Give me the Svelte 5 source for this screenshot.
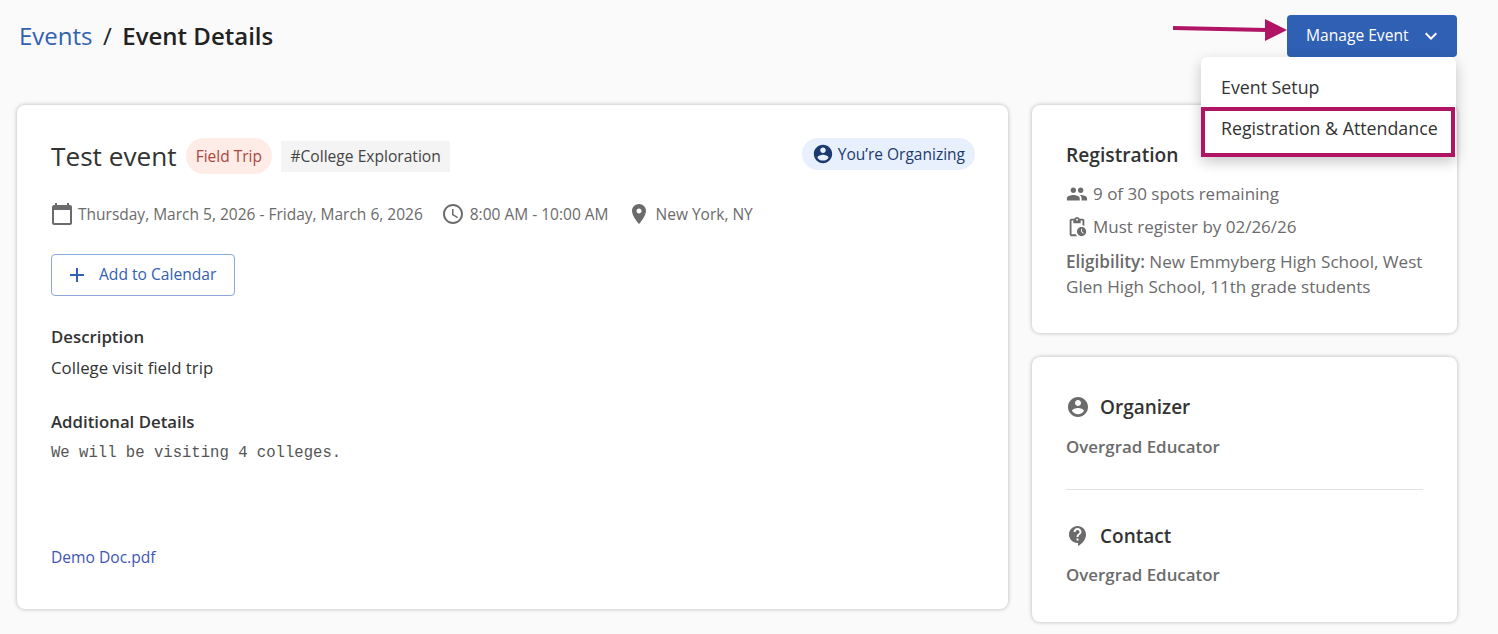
<script lang="ts">
  const paths = {
    calendar: 'M20 3h-1V1h-2v2H7V1H5v2H4c-1.1 0-2 .9-2 2v16c0 1.1.9 2 2 2h16c1.1 0 2-.9 2-2V5c0-1.1-.9-2-2-2zm0 18H4V8h16v13z',
    clock: 'M11.99 2C6.47 2 2 6.48 2 12s4.47 10 9.99 10C17.52 22 22 17.52 22 12S17.52 2 11.99 2zM12 20c-4.42 0-8-3.58-8-8s3.58-8 8-8 8 3.58 8 8-3.58 8-8 8zm.5-13H11v6l5.25 3.15.75-1.23-4.5-2.67z',
    pin: 'M12 2C8.13 2 5 5.13 5 9c0 5.25 7 13 7 13s7-7.75 7-13c0-3.87-3.13-7-7-7zm0 9.5c-1.38 0-2.5-1.12-2.5-2.5s1.12-2.5 2.5-2.5 2.5 1.12 2.5 2.5-1.12 2.5-2.5 2.5z',
    account: 'M12 2C6.48 2 2 6.48 2 12s4.48 10 10 10 10-4.48 10-10S17.52 2 12 2zm0 3c1.66 0 3 1.34 3 3s-1.34 3-3 3-3-1.34-3-3 1.34-3 3-3zm0 14.2c-2.5 0-4.71-1.28-6-3.22.03-1.99 4-3.08 6-3.08 1.99 0 5.97 1.09 6 3.08-1.29 1.94-3.5 3.22-6 3.22z',
    people: 'M16 11c1.66 0 2.99-1.34 2.99-3S17.66 5 16 5c-1.66 0-3 1.34-3 3s1.34 3 3 3zm-8 0c1.66 0 2.99-1.34 2.99-3S9.66 5 8 5C6.34 5 5 6.34 5 8s1.34 3 3 3zm0 2c-2.33 0-7 1.17-7 3.5V19h14v-2.5c0-2.33-4.67-3.5-7-3.5zm8 0c-.29 0-.62.02-.97.05 1.16.84 1.97 1.97 1.97 3.45V19h6v-2.5c0-2.33-4.67-3.5-7-3.5z',
    pending: 'M17 12c-2.76 0-5 2.24-5 5s2.24 5 5 5 5-2.24 5-5-2.24-5-5-5zm1.65 7.35L16.5 17.2V14h1v2.79l1.85 1.85-.7.71zM18 3h-3.18C14.4 1.84 13.3 1 12 1s-2.4.84-2.82 2H6c-1.1 0-2 .9-2 2v15c0 1.1.9 2 2 2h6.11c-.59-.57-1.07-1.25-1.42-2H6V5h2v3h8V5h2v5.08c.71.1 1.38.31 2 .6V5c0-1.1-.9-2-2-2zm-6 2c-.55 0-1-.45-1-1s.45-1 1-1 1 .45 1 1-.45 1-1 1z',
    help: 'M11.5 2C6.81 2 3 5.81 3 10.5S6.81 19 11.5 19h.5v3c4.86-2.34 8-7 8-11.5C20 5.81 16.19 2 11.5 2zm1 14.5h-2v-2h2v2zm0-3.5h-2c0-3.25 3-3 3-5 0-1.1-.9-2-2-2s-2 .9-2 2h-2c0-2.21 1.79-4 4-4s4 1.79 4 4c0 2.5-3 2.75-3 5z',
    plus: 'M19 13h-6v6h-2v-6H5v-2h6V5h2v6h6v2z',
    chevron: 'M7.41 8.59L12 13.17l4.59-4.58L18 10l-6 6-6-6 1.41-1.41z'
  };
</script>

{#snippet icon(name: keyof typeof paths, size: number)}
  <svg class="icon" width={size} height={size} viewBox="0 0 24 24" fill="currentColor" aria-hidden="true"><path d={paths[name]} /></svg>
{/snippet}

<div class="page">
  <header class="top">
    <nav class="crumbs">
      <a href="#events">Events</a>
      <span class="slash">/</span>
      <strong>Event Details</strong>
    </nav>
    <div class="manage">
      <button class="manage-btn">
        <span>Manage Event</span>
        {@render icon('chevron', 24)}
      </button>
      <div class="menu">
        <div class="menu-item">Event Setup</div>
        <div class="menu-item picked">Registration &amp; Attendance</div>
      </div>
      <svg class="arrow" width="116" height="30" viewBox="0 0 116 30" aria-hidden="true">
        <path d="M0 13 L94 15" stroke="#b01464" stroke-width="4" fill="none" />
        <path d="M92 4 L114 15 L92 26 Z" fill="#b01464" />
      </svg>
    </div>
  </header>

  <main class="layout">
    <section class="card event">
      <div class="title-row">
        <h1>Test event</h1>
        <span class="type">Field Trip</span>
        <span class="tag">#College Exploration</span>
        <span class="organizing">{@render icon('account', 22)}You’re Organizing</span>
      </div>
      <div class="meta">
        <span class="meta-item">{@render icon('calendar', 24)}Thursday, March 5, 2026 - Friday, March 6, 2026</span>
        <span class="meta-item">{@render icon('clock', 24)}8:00 AM - 10:00 AM</span>
        <span class="meta-item">{@render icon('pin', 24)}New York, NY</span>
      </div>
      <button class="calendar-btn">{@render icon('plus', 24)}<span>Add to Calendar</span></button>
      <h2 class="desc-head">Description</h2>
      <p class="desc">College visit field trip</p>
      <h2 class="details-head">Additional Details</h2>
      <pre>We will be visiting 4 colleges.</pre>
      <a class="doc" href="#doc">Demo Doc.pdf</a>
    </section>

    <aside class="side">
      <section class="card registration">
        <h2 class="reg-title">Registration</h2>
        <div class="reg-line">{@render icon('people', 22)}9 of 30 spots remaining</div>
        <div class="reg-line">{@render icon('pending', 22)}Must register by 02/26/26</div>
        <p class="eligibility"><b>Eligibility:</b> New Emmyberg High School, West Glen High School, 11th grade students</p>
      </section>
      <section class="card people">
        <h2 class="person-head">{@render icon('account', 24)}Organizer</h2>
        <div class="person">Overgrad Educator</div>
        <hr />
        <h2 class="person-head">{@render icon('help', 24)}Contact</h2>
        <div class="person last">Overgrad Educator</div>
      </section>
    </aside>
  </main>
</div>

<style>
  :global(body) {
    margin: 0;
    background: #fafafa;
    font-family: 'Open Sans', sans-serif;
    color: #333;
  }

  .page {
    width: 1498px;
    height: 634px;
    overflow: hidden;
    box-sizing: border-box;
    padding: 15px 41px 0 17px;
  }

  .top {
    display: flex;
    justify-content: space-between;
    align-items: center;
    height: 42px;
    margin-bottom: 48px;
  }

  .crumbs {
    margin-left: 2px;
    font-size: 24px;
    line-height: 42px;
    display: flex;
    gap: 10.5px;
    color: #222;
  }
  .crumbs a {
    color: #3260b2;
    text-decoration: none;
  }
  .crumbs strong {
    font-weight: 600;
  }

  .manage {
    position: relative;
  }
  .manage-btn {
    display: flex;
    align-items: center;
    justify-content: space-between;
    box-sizing: border-box;
    width: 170px;
    height: 42px;
    padding: 0 14px 2px 19px;
    border: 0;
    border-radius: 4px;
    background: #3060b3;
    color: #fff;
    font: 400 15.6px 'Open Sans', sans-serif;
  }
  .manage-btn .icon {
    margin-top: 2px;
  }
  .menu {
    position: absolute;
    top: 42px;
    right: 1px;
    width: 255px;
    height: 100px;
    box-sizing: border-box;
    padding-top: 10px;
    background: #fff;
    border-radius: 6px;
    box-shadow: 0 5px 14px rgba(0, 0, 0, 0.22);
    z-index: 2;
  }
  .menu-item {
    height: 41px;
    box-sizing: border-box;
    padding-left: 20px;
    font-size: 17.8px;
    line-height: 41px;
    color: #333;
    white-space: nowrap;
  }
  .picked {
    width: 254px;
    height: 50px;
    border: 4px solid #b01464;
    padding-left: 16px;
    line-height: 34px;
    margin-top: -1px;
  }
  .arrow {
    position: absolute;
    left: -114px;
    top: 0;
  }

  .layout {
    display: grid;
    grid-template-columns: 991px 425px;
    gap: 24px;
    align-items: start;
  }
  .card {
    box-sizing: border-box;
    background: #fff;
    border-radius: 8px;
    box-shadow: 0 0 4px rgba(0, 0, 0, 0.28);
  }
  .icon {
    flex: none;
    display: block;
  }

  .event {
    height: 504px;
    padding: 33px 33px 0 34px;
  }
  .title-row {
    display: flex;
    align-items: center;
    height: 36px;
  }
  h1 {
    margin: 0 9px 0 0;
    font-size: 26.2px;
    font-weight: 400;
    color: #333;
  }
  .type {
    padding: 0 10px;
    height: 36px;
    line-height: 36px;
    border-radius: 18px;
    background: #ffece6;
    color: #ab4640;
    font-size: 15.5px;
    margin-right: 9.5px;
  }
  .tag {
    padding: 0 9px;
    height: 31px;
    line-height: 31px;
    background: #f4f4f4;
    color: #444;
    font-size: 15.6px;
  }
  .organizing {
    margin-left: auto;
    align-self: flex-start;
    display: flex;
    align-items: center;
    gap: 4px;
    height: 32px;
    padding: 0 10px;
    border-radius: 16px;
    background: #e8f0fd;
    color: #1c3a70;
    font-size: 15.5px;
  }

  .meta {
    display: flex;
    gap: 18px;
    margin-top: 28px;
    font-size: 15.5px;
    color: #6b6b6b;
  }
  .meta-item {
    display: flex;
    align-items: center;
    gap: 5px;
    height: 24px;
  }
  .meta-item:first-child {
    gap: 4px;
  }
  .meta-item:first-child .icon {
    margin-left: -1px;
  }

  .calendar-btn {
    display: flex;
    align-items: center;
    gap: 10px;
    box-sizing: border-box;
    width: 184px;
    height: 42px;
    margin-top: 28px;
    padding: 0 13px;
    border: 1px solid #8aa8dc;
    border-radius: 4px;
    background: #fff;
    color: #3260b2;
    font: 400 15.6px 'Open Sans', sans-serif;
    white-space: nowrap;
  }
  .calendar-btn span {
    margin-top: -2px;
  }

  h2 {
    margin: 0;
    font-size: 16.8px;
    font-weight: 600;
    color: #333;
  }
  .desc-head {
    margin-top: 30px;
    line-height: 22px;
  }
  .desc {
    margin: 9px 0 0;
    font-size: 16.8px;
    line-height: 22px;
    color: #333;
  }
  .details-head {
    margin-top: 32px;
    line-height: 22px;
  }
  pre {
    margin: 10px 0 0;
    font: 15.6px/20px 'Liberation Mono', monospace;
    color: #555;
  }
  .doc {
    display: block;
    margin-top: 83px;
    font-size: 15.6px;
    line-height: 22px;
    color: #4155b5;
    text-decoration: none;
  }

  .side {
    display: flex;
    flex-direction: column;
    gap: 24px;
  }
  .registration {
    height: 228px;
    padding: 37px 34px 0;
  }
  .reg-title {
    font-size: 19.2px;
    line-height: 26px;
    margin-bottom: 9px;
  }
  .reg-line {
    display: flex;
    align-items: center;
    gap: 5px;
    height: 33px;
    font-size: 17px;
    color: #6b6b6b;
  }
  .eligibility {
    margin: 6px 0 0;
    font-size: 17.1px;
    line-height: 25px;
    color: #6b6b6b;
  }
  .eligibility b {
    font-weight: 600;
  }

  .people {
    height: 265px;
    padding: 37px 34px 0;
  }
  .person-head {
    display: flex;
    align-items: center;
    gap: 10px;
    font-size: 19px;
    line-height: 26px;
  }
  .person-head .icon {
    color: #6b6b6b;
  }
  .person {
    margin-top: 16px;
    font-size: 16.9px;
    font-weight: 600;
    line-height: 22px;
    color: #6b6b6b;
  }
  .person.last {
    margin-top: 15px;
  }
  hr {
    border: 0;
    border-top: 1px solid #e2e2e2;
    margin: 31px 0 33px;
  }
</style>
